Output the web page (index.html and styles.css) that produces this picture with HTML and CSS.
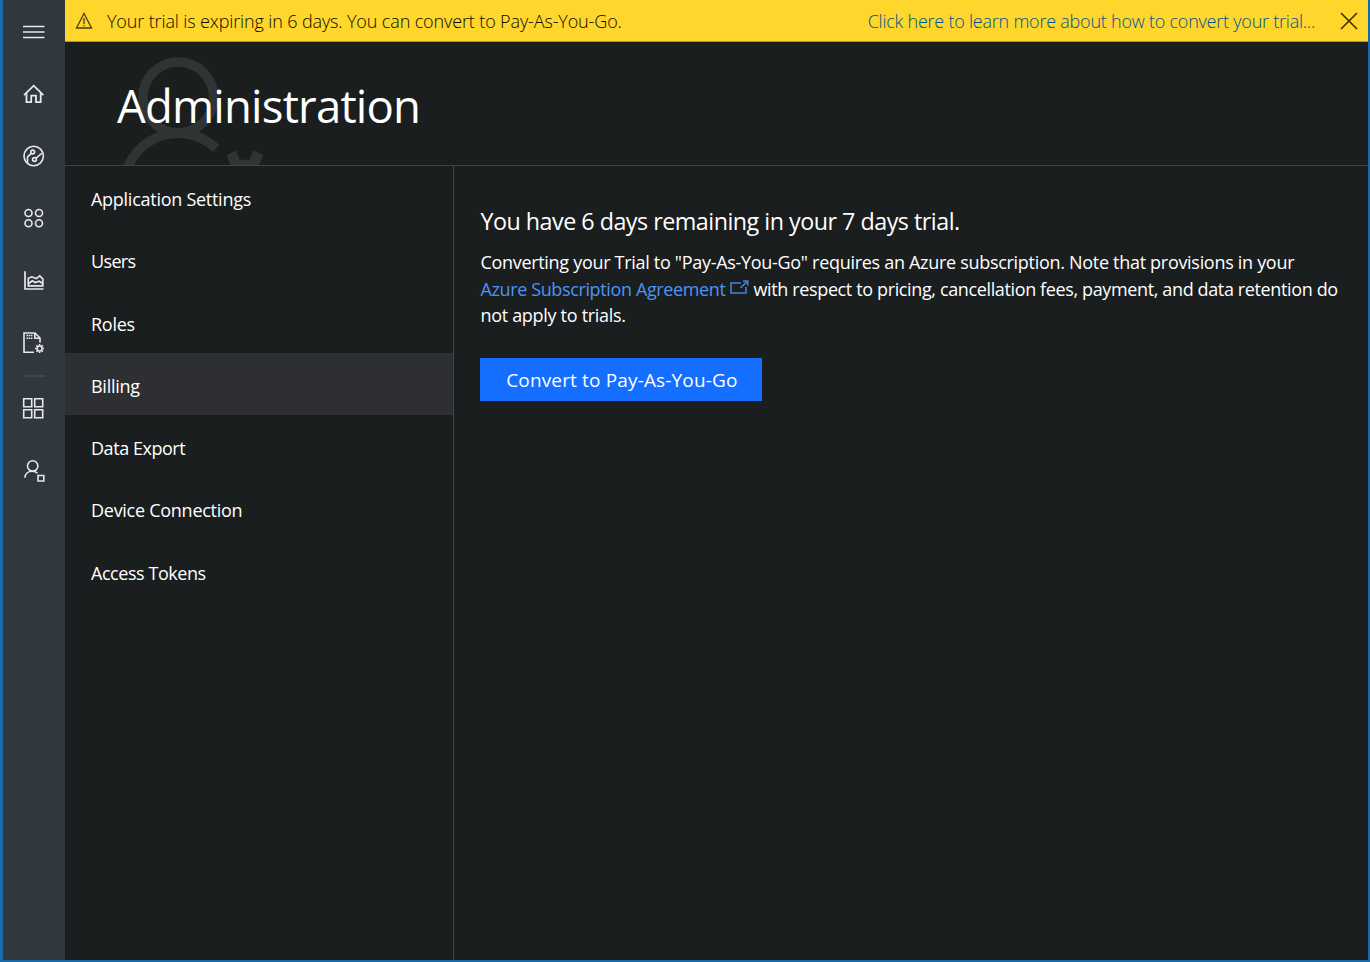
FILE: index.html
```html
<!DOCTYPE html>
<html lang="en">
<head>
<meta charset="utf-8">
<title>Administration</title>
<link rel="stylesheet" href="styles.css">
</head>
<body>
<div class="app">
  <nav class="rail">
    <a class="rail-item"><svg width="62" height="62" viewBox="3 0 62 62"><path d="M23 26.500h21.500M23 32h21.500M23 37.500h21.500" stroke-width="1.500"/></svg></a>
    <a class="rail-item"><svg width="62" height="62" viewBox="3 62.300 62 62"><path d="M24 95.500L33.700 86l9.700 9.500M26.500 93.500v9h4.700v-6.500h4.800v6.500h4.700v-9" stroke-width="1.800"/></svg></a>
    <a class="rail-item"><svg width="62" height="62" viewBox="3 125 62 62"><circle cx="33.700" cy="156" r="9.700"/><circle cx="32.700" cy="152" r="1.900"/><circle cx="34.500" cy="159.500" r="1.900"/><path d="M31.300 153.300l-3.800 3.500v6.500M36 158.200l6.200-5.200"/></svg></a>
    <a class="rail-item"><svg width="62" height="62" viewBox="3 187 62 62"><circle cx="28.500" cy="213" r="3.500"/><circle cx="39" cy="213" r="3.500"/><circle cx="28.500" cy="223.200" r="3.500"/><circle cx="39" cy="223.200" r="3.500"/></svg></a>
    <a class="rail-item"><svg width="62" height="62" viewBox="3 249.200 62 62"><path d="M25 271.500v17.700h18.500M28.300 286v-7.500l3.500-1.500 4.500 1.800 3.500-2.800 3 3V286zM28.500 284l3.700-3 3 1.800 4-1.500 3 2.200" stroke-width="1.700"/></svg></a>
    <a class="rail-item"><svg width="62" height="62" viewBox="3 311 62 62"><path d="M34 352.300h-10v-19.300h11l5 5v4.500M34.800 333v5.200h5"/><path d="M26.500 335.500h6M26.500 338.300h6" stroke-dasharray="1.600 .6"/><circle cx="39.600" cy="348.500" r="2.500"/><path d="M39.600 344v1.500M39.600 351.500v1.500M35.100 348.500h1.500M42.600 348.500h1.500M36.400 345.300l1 1M41.800 350.700l1 1M42.800 345.300l-1 1M37.400 350.700l-1 1"/></svg></a>
    <div class="rail-sep"></div>
    <a class="rail-item"><svg width="62" height="62" viewBox="3 377 62 62"><path d="M23.700 398.700h8v8h-8zM34.700 398.700h8v8h-8zM23.700 409.700h8v8h-8zM34.700 409.700h8v8h-8z"/></svg></a>
    <a class="rail-item"><svg width="62" height="62" viewBox="3 439.300 62 62"><circle cx="32.700" cy="466.200" r="5.200"/><path d="M25 478c0-4.500 3.500-6.500 7.500-6.500 2 0 3.700.7 5 2M38 475.800h5.800v5.500H38z"/></svg></a>
  </nav>
  <div class="main">
    <div class="banner">
      <svg class="warn" width="18" height="18" viewBox="0 0 18 18"><path d="M9 1.500L1.500 16h15zM9 6v6M9 13v1.300"/></svg>
      <span class="banner-text">Your trial is expiring in 6 days. You can convert to Pay-As-You-Go.</span>
      <a class="banner-link">Click here to learn more about how to convert your trial...</a>
      <svg class="close" width="18" height="18" viewBox="0 0 18 18"><path d="M1 1l16 16M17 1L1 17"/></svg>
    </div>
    <header class="header">
      <svg class="watermark" width="160" height="110" viewBox="110 55 160 110"><circle cx="178.300" cy="97.300" r="35.400"/><path d="M123.600 188a54.700 54.700 0 0 1 92.500-39.600"/><path class="solid" d="M226.500 155.300l9.500-4.700 4 9.400q5-1 9.500 0l4-9.400 10 4.300-4.300 10.100h-28.700z"/></svg>
      <h1>Administration</h1>
    </header>
    <div class="body">
      <ul class="menu">
        <li>Application Settings</li>
        <li class="tighter">Users</li>
        <li>Roles</li>
        <li class="active">Billing</li>
        <li class="tight">Data Export</li>
        <li>Device Connection</li>
        <li class="tight">Access Tokens</li>
      </ul>
      <section class="content">
        <h2>You have 6 days remaining in your 7 days trial.</h2>
        <p>Converting your Trial to "Pay-As-You-Go" requires an Azure subscription. Note that provisions in your<br><a class="link">Azure Subscription Agreement</a><svg class="ext" width="19" height="16" viewBox="0 0 19 16"><path d="M11 3H1v10h15V7M10.500 8l7-7M13 1h4.700v4.500"/></svg><span class="terms">with respect to pricing, cancellation fees, payment, and data retention do</span><br>not apply to trials.</p>
        <button class="cta">Convert to Pay-As-You-Go</button>
      </section>
    </div>
  </div>
</div>
</body>
</html>
```
FILE: styles.css
```css
* { box-sizing: border-box; }
body { margin: 0; font-family: "Open Sans", "Noto Sans", sans-serif; color: #fff; }
svg { fill: none; stroke: #e8e8e8; stroke-width: 1.6; display: block; }
.app { width: 1370px; height: 962px; display: flex; background: #1b1e1f; border: 3px solid #1a6aa8; border-top: 0; border-bottom-width: 2px; border-right-width: 2px; overflow: hidden; }
.rail { width: 62px; background: #31373e; flex: none; }
.rail-item { display: block; height: 62.3px; }
.rail-sep { height: 3px; margin: 0 20px; border-bottom: 2px solid #41464c; }
.main { flex: 1; display: flex; flex-direction: column; }
.banner { height: 42px; background: #ffd62b; border-bottom: 1px solid #b09724; display: flex; align-items: center; padding: 0 10px; color: #0c0a00; font-size: 18px; font-weight: 300; white-space: nowrap; }
.banner-text { letter-spacing: -.13px; }
.warn { stroke: #4b4010; stroke-width: 1.3; margin-right: 14px; }
.banner-link { margin-left: auto; color: #00528f; letter-spacing: -.23px; }
.close { stroke: #3a300b; margin-left: 25px; }
.header { position: relative; height: 124px; border-bottom: 1px solid #414344; padding-left: 52px; }
.watermark { position: absolute; left: 45px; top: 13px; stroke: #313435; stroke-width: 9.5; }
.watermark .solid { fill: #313435; stroke: none; }
h1 { position: relative; margin: 0; font-size: 45.5px; font-weight: 400; line-height: 126px; letter-spacing: -.8px; }
.body { flex: 1; display: flex; }
.menu { width: 389px; border-right: 1px solid #414344; margin: 0; padding: 0; list-style: none; font-size: 18px; letter-spacing: -.27px; }
.menu li { height: 62.3px; line-height: 66px; padding-left: 26px; }
.menu .tight { letter-spacing: -.45px; }
.menu .tighter { letter-spacing: -.65px; }
.menu .active { background: #2e2f32; }
.content { padding: 37px 0 0 26.4px; white-space: nowrap; }
h2 { margin: 0; font-size: 23.3px; font-weight: 400; line-height: 36px; letter-spacing: -.5px; }
p { margin: 10px 0 29px; font-size: 18px; line-height: 26.6px; letter-spacing: -.3px; }
.link { color: #4c94f5; letter-spacing: -.37px; }
.terms { letter-spacing: -.37px; }
.ext { display: inline-block; stroke: #4283dc; margin: 0 5px 0 4px; }
.cta { display: block; width: 282px; height: 43px; border: 0; background: #146eff; color: #fff; font: 400 19px "Open Sans", sans-serif; letter-spacing: .15px; padding: 2px 0 0 1px; }
```
